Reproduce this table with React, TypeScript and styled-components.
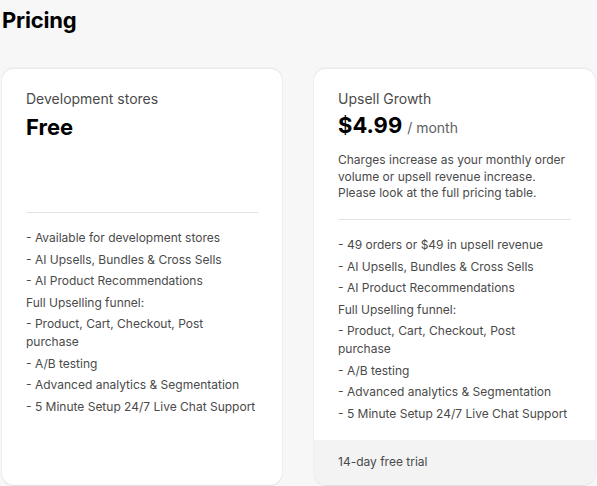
import React from "react";
import styled, { createGlobalStyle } from "styled-components";

const GlobalStyle = createGlobalStyle`
  html, body {
    margin: 0;
    padding: 0;
    background: #f7f7f7;
  }
  body {
    font-family: Inter, "Noto Sans", "Liberation Sans", sans-serif;
    color: #303030;
    -webkit-font-smoothing: antialiased;
  }
`;

const Page = styled.div`
  width: 597px;
  height: 486px;
  box-sizing: border-box;
  padding: 8px 2px 0 2px;
  overflow: hidden;
`;

const Heading = styled.h1`
  margin: 0;
  font-size: 22px;
  line-height: 24px;
  font-weight: 700;
  color: #000;
  letter-spacing: -0.2px;
`;

const Grid = styled.div`
  margin-top: 36px;
  display: grid;
  grid-template-columns: 280px 281px;
  column-gap: 32px;
  align-items: stretch;
`;

const Card = styled.div`
  background: #ffffff;
  border-radius: 12px;
  box-shadow: 0 1px 0 0 rgba(26, 26, 26, 0.07), 0 1px 0 0 rgba(208, 208, 208, 0.4) inset,
    0 0 0 1px rgba(0, 0, 0, 0.03);
  display: flex;
  flex-direction: column;
  overflow: hidden;
`;

const Body = styled.div`
  flex: 1;
  padding: 21px 24px 17px 24px;
  display: flex;
  flex-direction: column;
`;

const Header = styled.div<{ $minHeight?: number }>`
  display: flex;
  flex-direction: column;
  min-height: ${(p) => (p.$minHeight ? `${p.$minHeight}px` : "auto")};
`;

const PlanName = styled.div`
  font-size: 14px;
  line-height: 20px;
  color: #4a4a4a;
`;

const PriceRow = styled.div<{ $offset: number }>`
  margin-top: ${(p) => p.$offset}px;
  display: flex;
  align-items: baseline;
  gap: 5px;
`;

const Price = styled.span`
  font-size: 22px;
  line-height: 28px;
  font-weight: 700;
  color: #000;
`;

const Period = styled.span`
  font-size: 14px;
  line-height: 20px;
  color: #616161;
`;

const Description = styled.p`
  margin: 13px 0 0 0;
  font-size: 12px;
  line-height: 16.7px;
  color: #4a4a4a;
`;

const Divider = styled.hr`
  margin: 17px 0 16px 0;
  border: none;
  border-top: 1px solid #e3e3e3;
`;

const Features = styled.ul`
  list-style: none;
  margin: 0;
  padding: 0;
  display: flex;
  flex-direction: column;
  gap: 3.5px;
`;

const Feature = styled.li`
  font-size: 12px;
  line-height: 18px;
  color: #4a4a4a;
`;

const Footer = styled.div`
  background: #f3f3f3;
  padding: 12px 24px 14px 24px;
  font-size: 12px;
  line-height: 19px;
  color: #4a4a4a;
`;

type Plan = {
  name: string;
  price: string;
  period?: string;
  description?: string;
  features: string[];
  footer?: string;
  headerMin?: number;
  priceOffset: number;
};

const sharedFeatures = [
  "- AI Upsells, Bundles & Cross Sells",
  "- AI Product Recommendations",
  "Full Upselling funnel:",
  "- Product, Cart, Checkout, Post purchase",
  "- A/B testing",
  "- Advanced analytics & Segmentation",
  "- 5 Minute Setup 24/7 Live Chat Support",
];

const plans: Plan[] = [
  {
    name: "Development stores",
    price: "Free",
    features: ["- Available for development stores", ...sharedFeatures],
    headerMin: 106,
    priceOffset: 4,
  },
  {
    name: "Upsell Growth",
    price: "$4.99",
    period: "/ month",
    description:
      "Charges increase as your monthly order volume or upsell revenue increase. Please look at the full pricing table.",
    features: ["- 49 orders or $49 in upsell revenue", ...sharedFeatures],
    footer: "14-day free trial",
    priceOffset: 2,
  },
];

export default function App() {
  return (
    <>
      <GlobalStyle />
      <Page>
        <Heading>Pricing</Heading>
        <Grid>
          {plans.map((plan) => (
            <Card key={plan.name}>
              <Body>
                <Header $minHeight={plan.headerMin}>
                  <PlanName>{plan.name}</PlanName>
                  <PriceRow $offset={plan.priceOffset}>
                    <Price>{plan.price}</Price>
                    {plan.period && <Period>{plan.period}</Period>}
                  </PriceRow>
                  {plan.description && <Description>{plan.description}</Description>}
                </Header>
                <Divider />
                <Features>
                  {plan.features.map((f) => (
                    <Feature key={f}>{f}</Feature>
                  ))}
                </Features>
              </Body>
              {plan.footer && <Footer>{plan.footer}</Footer>}
            </Card>
          ))}
        </Grid>
      </Page>
    </>
  );
}
